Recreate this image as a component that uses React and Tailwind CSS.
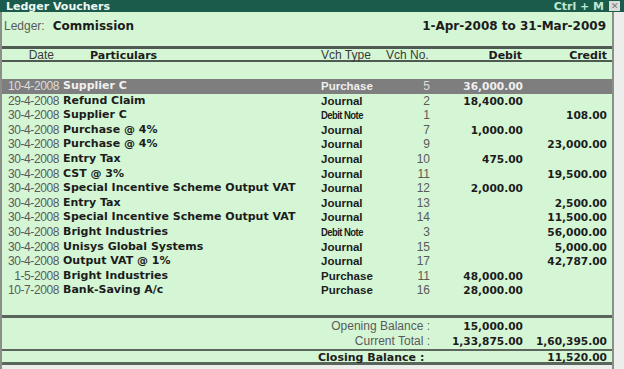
import React from 'react';

const rows = [
  ['10-4-2008', 'Supplier C', 'Purchase', '5', '36,000.00', '', true],
  ['29-4-2008', 'Refund Claim', 'Journal', '2', '18,400.00', ''],
  ['30-4-2008', 'Supplier C', 'Debit Note', '1', '', '108.00'],
  ['30-4-2008', 'Purchase @ 4%', 'Journal', '7', '1,000.00', ''],
  ['30-4-2008', 'Purchase @ 4%', 'Journal', '9', '', '23,000.00'],
  ['30-4-2008', 'Entry Tax', 'Journal', '10', '475.00', ''],
  ['30-4-2008', 'CST @ 3%', 'Journal', '11', '', '19,500.00'],
  ['30-4-2008', 'Special Incentive Scheme Output VAT', 'Journal', '12', '2,000.00', ''],
  ['30-4-2008', 'Entry Tax', 'Journal', '13', '', '2,500.00'],
  ['30-4-2008', 'Special Incentive Scheme Output VAT', 'Journal', '14', '', '11,500.00'],
  ['30-4-2008', 'Bright Industries', 'Debit Note', '3', '', '56,000.00'],
  ['30-4-2008', 'Unisys Global Systems', 'Journal', '15', '', '5,000.00'],
  ['30-4-2008', 'Output VAT @ 1%', 'Journal', '17', '', '42,787.00'],
  ['1-5-2008', 'Bright Industries', 'Purchase', '11', '48,000.00', ''],
  ['10-7-2008', 'Bank-Saving A/c', 'Purchase', '16', '28,000.00', ''],
];

const cols = 'grid grid-cols-[57px_262px_65px_56px_82px_84px] whitespace-nowrap';
const vd = "font-['DejaVu_Sans',Verdana,sans-serif]";
const ar = "font-['Liberation_Sans',Arial,sans-serif]";
const amt = `text-right pr-[1px] text-[10.6px] font-bold text-[#1c1c1c] ${vd}`;

function Row({ r }) {
  const [date, part, type, no, dr, cr, hl] = r;
  const main = hl ? 'text-[#f0f0f0]' : 'text-[#1c1c1c]';
  const dim = hl ? 'text-[#dcdcdc]' : 'text-[#5a5a5a]';
  return (
    <div className={`${cols} h-[14.6px] leading-[14.6px] ${hl ? 'bg-[#7e7e7e]' : ''}`}>
      <div className={`text-right text-[12px] tracking-[-0.4px] ${dim} ${ar}`}>{date}</div>
      <div className={`pl-[4px] text-[11px] font-bold ${main} ${vd}`}>{part}</div>
      <div
        className={`font-bold ${main} ${ar} ${
          type === 'Debit Note' ? 'text-[10.5px] tracking-[-0.6px] scale-x-90 origin-left' : 'text-[11.5px]'
        }`}
      >
        {type}
      </div>
      <div className={`text-right pr-[12px] text-[12px] ${dim} ${ar}`}>{no}</div>
      <div className={`text-right pr-[1px] text-[10.6px] font-bold ${main} ${vd}`}>{dr}</div>
      <div className={`text-right pr-[1px] text-[10.6px] font-bold ${main} ${vd}`}>{cr}</div>
    </div>
  );
}

export default function App() {
  return (
    <div className="w-[624px] h-[369px] bg-[#eceeec] flex flex-col overflow-hidden">
      {/* title bar */}
      <div className="h-[12px] bg-[#1b5b4b] flex items-center pl-[6px] pr-[4px]">
        <span className={`text-[11px] font-bold text-[#eef8f2] leading-none ${vd}`}>Ledger Vouchers</span>
        <span className={`ml-auto text-[11px] font-bold text-[#bfe8d2] leading-none ${vd}`}>Ctrl + M</span>
        <span className={`ml-[5px] w-[11px] h-[10px] bg-[#d9dcd9] flex items-center justify-center text-[9px] leading-none text-[#777] ${ar}`}>✕</span>
      </div>

      <div className="flex flex-1">
        <div className="w-[614px] bg-[#d5f6d5] border-l-2 border-r-2 border-[#8a8f8a] flex flex-col">
          {/* ledger line */}
          <div className="h-[34px] flex items-start pt-[5px] pr-[6px]">
            <span className={`text-[12px] text-[#5a5a5a] pl-[2px] ${ar}`}>Ledger:</span>
            <span className={`ml-[8px] text-[12px] font-bold text-[#1c1c1c] ${vd}`}>Commission</span>
            <span className={`ml-auto text-[12px] font-bold text-[#1c1c1c] ${vd}`}>1-Apr-2008 to 31-Mar-2009</span>
          </div>

          {/* header */}
          <div className={`${cols} h-[16px] leading-[13px] border-t-[3px] border-b-2 border-[#4f5a52]`}>
            <div className={`text-right pr-[5px] text-[12px] text-[#3a3a3a] ${ar}`}>Date</div>
            <div className={`pl-[31px] text-[11px] font-bold text-[#1c1c1c] ${vd}`}>Particulars</div>
            <div className={`text-[12px] text-[#3a3a3a] ${ar}`}>Vch Type</div>
            <div className={`text-[12px] text-[#3a3a3a] ${ar}`}>Vch No.</div>
            <div className={`text-right pr-[2px] text-[11px] font-bold text-[#1c1c1c] ${vd}`}>Debit</div>
            <div className={`text-right pr-[1px] text-[11px] font-bold text-[#1c1c1c] ${vd}`}>Credit</div>
          </div>

          <div className="h-[17px]" />

          {rows.map((r, i) => (
            <Row key={i} r={r} />
          ))}

          <div className="flex-1" />

          {/* totals */}
          <div className="border-t-[3px] border-[#5a655c] pt-[1px]">
            <div className={`${cols} h-[15px] leading-[15px]`}>
              <div className={`col-span-4 text-right pr-[12px] text-[12px] text-[#5a5a5a] ${ar}`}>Opening Balance :</div>
              <div className={amt}>15,000.00</div>
              <div />
            </div>
            <div className={`${cols} h-[15px] leading-[15px]`}>
              <div className={`col-span-4 text-right pr-[12px] text-[12px] text-[#5a5a5a] ${ar}`}>Current Total :</div>
              <div className={amt}>1,33,875.00</div>
              <div className={amt}>1,60,395.00</div>
            </div>
          </div>
          <div className={`${cols} h-[16px] leading-[13px] border-t-2 border-b-[3px] border-[#5a655c]`}>
            <div className="col-span-2" />
            <div className={`col-span-3 -ml-[3px] text-[11px] font-bold text-[#1c1c1c] ${vd}`}>Closing Balance :</div>
            <div className={amt}>11,520.00</div>
          </div>
          <div className="h-[4px] bg-[#eceeec]" />
        </div>
        <div className="flex-1 bg-[#eceeec]" />
      </div>
    </div>
  );
}
